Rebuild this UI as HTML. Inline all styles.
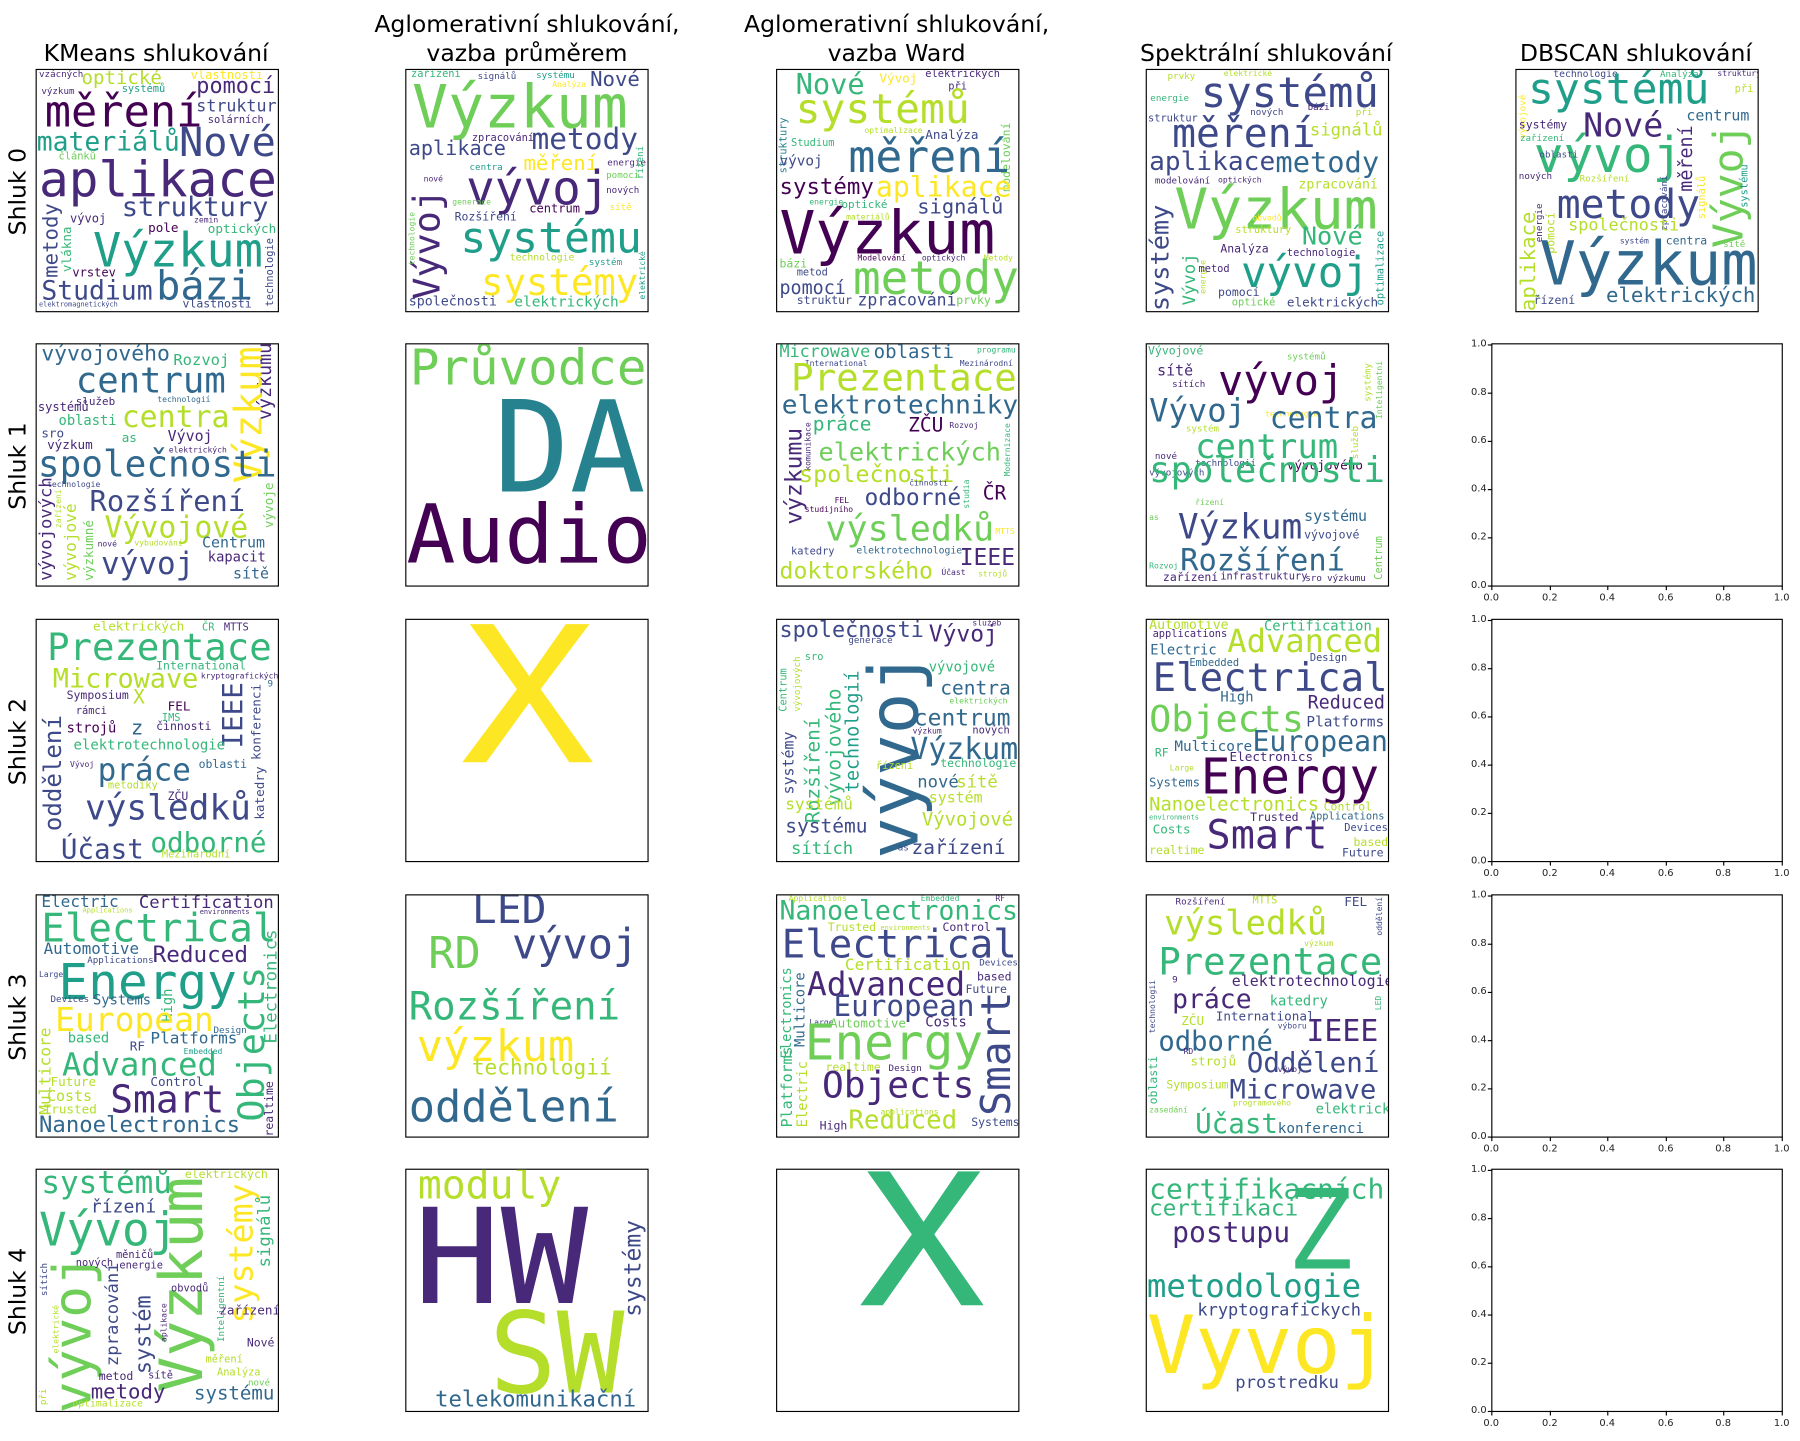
<!DOCTYPE html>
<html><head><meta charset="utf-8"><style>
html,body{margin:0;padding:0;background:#fff;overflow:hidden}
#w{position:absolute;left:0;top:0;width:1568px;height:1255px;transform:scale(1.148);transform-origin:0 0}
.t{position:absolute;font-family:"DejaVu Sans","Liberation Sans",sans-serif;font-size:20.5px;color:#000;text-align:center;line-height:25px;white-space:nowrap}
.rl{position:absolute;font-family:"DejaVu Sans",sans-serif;font-size:20.5px;transform:rotate(-90deg);transform-origin:0 0;white-space:nowrap}
.p{position:absolute;width:212px;height:212px;border:1px solid #000;box-sizing:border-box;overflow:hidden;background:#fff}
.p i{position:absolute;font-style:normal;font-family:"DejaVu Sans Mono","Liberation Mono",monospace;line-height:1;white-space:nowrap}
.p i.r{transform:rotate(-90deg);transform-origin:0 0}
.a{color:#440154}.b{color:#482878}.c{color:#3e4989}.d{color:#31688e}.e{color:#26828e}.f{color:#1f9e89}.g{color:#35b779}.h{color:#6ece58}.i{color:#b5de2b}.j{color:#fde725}
.ax{position:absolute;left:1299px;width:254px;height:212px;border:1px solid #000;box-sizing:border-box}
.ax span{position:absolute;font-family:"DejaVu Sans",sans-serif;font-size:8.6px;color:#222;line-height:1;white-space:nowrap}
.ax span.y{right:257px;text-align:right}
.ax span.x{top:217px;width:20px;text-align:center}
.ax b{position:absolute;background:#000}
.ax b.ty{left:-4px;width:4px;height:1px}
.ax b.tx{top:210px;width:1px;height:4px}
</style></head><body><div id="w">

<div class="t" style="left:36px;top:34px;width:200px">KMeans shlukování</div>
<div class="t" style="left:300px;top:9px;width:318px">Aglomerativní shlukování,<br>vazba průměrem</div>
<div class="t" style="left:622px;top:9px;width:318px">Aglomerativní shlukování,<br>vazba Ward</div>
<div class="t" style="left:970px;top:34px;width:266px">Spektrální shlukování</div>
<div class="t" style="left:1300px;top:34px;width:250px">DBSCAN shlukování</div>

<div class="rl" style="left:3px;top:205px">Shluk 0</div>
<div class="rl" style="left:3px;top:444px">Shluk 1</div>
<div class="rl" style="left:3px;top:684px">Shluk 2</div>
<div class="rl" style="left:3px;top:924px">Shluk 3</div>
<div class="rl" style="left:3px;top:1163px">Shluk 4</div>

<!-- Row 0 -->
<div class="p" style="left:31px;top:60px">
<i class="b" style="left:2px;top:0;font-size:8px">vzácných</i>
<i class="i" style="left:39px;top:-1px;font-size:16.6px">optické</i>
<i class="j" style="left:134px;top:0;font-size:10.5px">vlastnosti</i>
<i class="b" style="left:139px;top:5px;font-size:19px">pomocí</i>
<i class="b" style="left:4px;top:15px;font-size:8px">výzkum</i>
<i class="f" style="left:74px;top:13px;font-size:9px">systémů</i>
<i class="a" style="left:7px;top:17px;font-size:38px">měření</i>
<i class="c" style="left:139px;top:25px;font-size:14.5px">struktur</i>
<i class="b" style="left:149px;top:40px;font-size:9px">solárních</i>
<i class="f" style="left:0;top:52px;font-size:23px">materiálů</i>
<i class="c" style="left:124px;top:47px;font-size:35px">Nové</i>
<i class="h" style="left:19px;top:72px;font-size:9px">článků</i>
<i class="b" style="left:2px;top:75px;font-size:43px">aplikace</i>
<i class="c" style="left:74px;top:108px;font-size:23.6px">struktury</i>
<i class="c r" style="left:4px;top:181px;font-size:18px">metody</i>
<i class="b" style="left:29px;top:125px;font-size:10.5px">vývoj</i>
<i class="a" style="left:97px;top:132px;font-size:11px">pole</i>
<i class="b" style="left:137px;top:128px;font-size:7px">zemin</i>
<i class="g" style="left:149px;top:133px;font-size:11px">optických</i>
<i class="f" style="left:49px;top:137px;font-size:41px">Výzkum</i>
<i class="g r" style="left:21px;top:176px;font-size:11px">vlákna</i>
<i class="a" style="left:31px;top:172px;font-size:10.5px">vrstev</i>
<i class="d" style="left:104px;top:172px;font-size:35px">bázi</i>
<i class="c" style="left:4px;top:182px;font-size:23px">Studium</i>
<i class="c r" style="left:200px;top:206px;font-size:9px">technologie</i>
<i class="c" style="left:127px;top:200px;font-size:10px">vlastnosti</i>
<i class="c" style="left:2px;top:202px;font-size:6px">elektromagnetických</i>
</div>

<div class="p" style="left:353px;top:60px">
<i class="g" style="left:4px;top:0;font-size:9px">zařízení</i>
<i class="c" style="left:62px;top:2px;font-size:8px">signálů</i>
<i class="f" style="left:113px;top:1px;font-size:8px">systému</i>
<i class="j" style="left:127px;top:10px;font-size:7px">Analýza</i>
<i class="c" style="left:160px;top:0;font-size:18px">Nové</i>
<i class="h" style="left:5px;top:7px;font-size:52px">Výzkum</i>
<i class="c" style="left:2px;top:61px;font-size:17.6px">aplikace</i>
<i class="b" style="left:57px;top:56px;font-size:9px">zpracování</i>
<i class="c" style="left:109px;top:49px;font-size:25.7px">metody</i>
<i class="b r" style="left:2px;top:200px;font-size:32px">Vývoj</i>
<i class="j" style="left:102px;top:73px;font-size:18px">měření</i>
<i class="b" style="left:15px;top:92px;font-size:7px">nové</i>
<i class="f" style="left:55px;top:81px;font-size:8px">centra</i>
<i class="b" style="left:175px;top:77px;font-size:8px">energie</i>
<i class="g r" style="left:200px;top:95px;font-size:8px">řízení</i>
<i class="h" style="left:174px;top:88px;font-size:8px">pomocí</i>
<i class="b" style="left:52px;top:82px;font-size:41.5px">vývoj</i>
<i class="b" style="left:174px;top:101px;font-size:8px">nových</i>
<i class="h r" style="left:2px;top:170px;font-size:7px">technologie</i>
<i class="c" style="left:42px;top:124px;font-size:10px">Rozšíření</i>
<i class="a" style="left:107px;top:116px;font-size:10.5px">centrum</i>
<i class="j" style="left:177px;top:116px;font-size:8px">sítě</i>
<i class="h" style="left:40px;top:112px;font-size:7px">generace</i>
<i class="f" style="left:47px;top:128px;font-size:37.5px">systému</i>
<i class="i" style="left:90px;top:160px;font-size:8.5px">technologie</i>
<i class="f" style="left:159px;top:164px;font-size:8px">systém</i>
<i class="f r" style="left:203px;top:200px;font-size:7px">elektrické</i>
<i class="j" style="left:65px;top:169px;font-size:32.5px">systémy</i>
<i class="c" style="left:2px;top:196px;font-size:11.6px">společnosti</i>
<i class="g" style="left:94px;top:196px;font-size:12.6px">elektrických</i>
</div>

<div class="p" style="left:676px;top:60px">
<i class="e r" style="left:2px;top:90px;font-size:9px">struktury</i>
<i class="g" style="left:16px;top:0;font-size:25px">Nové</i>
<i class="j" style="left:89px;top:2px;font-size:11px">Vývoj</i>
<i class="b" style="left:129px;top:0;font-size:9px">elektrických</i>
<i class="b" style="left:149px;top:11px;font-size:9px">při</i>
<i class="i" style="left:16px;top:17px;font-size:36px">systémů</i>
<i class="h r" style="left:196px;top:106px;font-size:10px">modelování</i>
<i class="g" style="left:12px;top:60px;font-size:9px">Studium</i>
<i class="i" style="left:76px;top:50px;font-size:7px">optimalizace</i>
<i class="c" style="left:129px;top:51px;font-size:11px">Analýza</i>
<i class="c" style="left:2px;top:73px;font-size:12.5px">vývoj</i>
<i class="d" style="left:62px;top:57px;font-size:39px">měření</i>
<i class="a" style="left:2px;top:92px;font-size:19.5px">systémy</i>
<i class="j" style="left:86px;top:90px;font-size:24.5px">aplikace</i>
<i class="g" style="left:28px;top:112px;font-size:7px">energie</i>
<i class="g" style="left:56px;top:113px;font-size:9.5px">optické</i>
<i class="c" style="left:122px;top:111px;font-size:17.8px">signálů</i>
<i class="i" style="left:60px;top:125px;font-size:7px">materiálů</i>
<i class="a" style="left:2px;top:117px;font-size:52px">Výzkum</i>
<i class="a" style="left:70px;top:161px;font-size:7px">Modelování</i>
<i class="b" style="left:126px;top:161px;font-size:7px">optických</i>
<i class="i" style="left:180px;top:161px;font-size:7px">Metody</i>
<i class="h" style="left:2px;top:165px;font-size:10px">bázi</i>
<i class="h" style="left:66px;top:162px;font-size:40px">metody</i>
<i class="c" style="left:17px;top:173px;font-size:9px">metod</i>
<i class="c" style="left:2px;top:182px;font-size:16px">pomocí</i>
<i class="c" style="left:17px;top:197px;font-size:10px">struktur</i>
<i class="c" style="left:70px;top:194px;font-size:14.3px">zpracování</i>
<i class="h" style="left:156px;top:197px;font-size:10px">prvky</i>
</div>

<div class="p" style="left:998px;top:60px">
<i class="i" style="left:18px;top:2px;font-size:8px">prvky</i>
<i class="i" style="left:67px;top:0;font-size:7px">elektrické</i>
<i class="c" style="left:47px;top:2px;font-size:36.8px">systémů</i>
<i class="g" style="left:3px;top:21px;font-size:8px">energie</i>
<i class="c" style="left:22px;top:39px;font-size:34.6px">měření</i>
<i class="c" style="left:90px;top:33px;font-size:8px">nových</i>
<i class="b" style="left:140px;top:29px;font-size:8px">bázi</i>
<i class="i" style="left:182px;top:33px;font-size:8px">při</i>
<i class="c" style="left:1px;top:39px;font-size:9px">struktur</i>
<i class="i" style="left:142px;top:45px;font-size:15px">signálů</i>
<i class="c" style="left:2px;top:69px;font-size:22.8px">aplikace</i>
<i class="d" style="left:112px;top:68px;font-size:25px">metody</i>
<i class="b" style="left:7px;top:93px;font-size:8px">modelování</i>
<i class="b" style="left:62px;top:93px;font-size:7px">optických</i>
<i class="i" style="left:132px;top:94px;font-size:11.5px">zpracování</i>
<i class="c r" style="left:2px;top:210px;font-size:22px">systémy</i>
<i class="h" style="left:24px;top:97px;font-size:49px">Výzkum</i>
<i class="g r" style="left:30px;top:205px;font-size:15px">Vývoj</i>
<i class="i r" style="left:46px;top:195px;font-size:7px">energie</i>
<i class="i" style="left:77px;top:136px;font-size:9px">struktury</i>
<i class="j" style="left:92px;top:126px;font-size:7px">obvodů</i>
<i class="g" style="left:135px;top:135px;font-size:22px">Nové</i>
<i class="b" style="left:64px;top:152px;font-size:10px">Analýza</i>
<i class="b" style="left:122px;top:156px;font-size:9px">technologie</i>
<i class="b" style="left:45px;top:170px;font-size:9px">metod</i>
<i class="f" style="left:82px;top:158px;font-size:37px">vývoj</i>
<i class="f r" style="left:200px;top:205px;font-size:9px">optimalizace</i>
<i class="c" style="left:62px;top:190px;font-size:10px">pomocí</i>
<i class="h" style="left:74px;top:199px;font-size:9px">optické</i>
<i class="c" style="left:122px;top:197px;font-size:11px">elektrických</i>
</div>

<div class="p" style="left:1320px;top:60px">
<i class="c" style="left:32px;top:0;font-size:8.5px">technologie</i>
<i class="g" style="left:125px;top:0;font-size:8px">Analýza</i>
<i class="b" style="left:175px;top:0;font-size:7px">struktury</i>
<i class="f" style="left:10px;top:-2px;font-size:37.5px">systémů</i>
<i class="i" style="left:190px;top:13px;font-size:9px">při</i>
<i class="j r" style="left:2px;top:60px;font-size:8px">vývojové</i>
<i class="b" style="left:2px;top:44px;font-size:10px">systémy</i>
<i class="b" style="left:58px;top:34px;font-size:29px">Nové</i>
<i class="d" style="left:148px;top:34px;font-size:13px">centrum</i>
<i class="g" style="left:3px;top:56px;font-size:8px">zařízení</i>
<i class="g" style="left:15px;top:54px;font-size:43px">vývoj</i>
<i class="c" style="left:20px;top:70px;font-size:8px">oblasti</i>
<i class="b r" style="left:140px;top:106px;font-size:16px">měření</i>
<i class="h r" style="left:168px;top:155px;font-size:36px">Vývoj</i>
<i class="f r" style="left:195px;top:120px;font-size:9px">systému</i>
<i class="j r" style="left:158px;top:130px;font-size:9px">signálů</i>
<i class="b" style="left:2px;top:89px;font-size:8px">nových</i>
<i class="i" style="left:55px;top:91px;font-size:8px">Rozšíření</i>
<i class="c r" style="left:125px;top:140px;font-size:8px">zpracování</i>
<i class="c" style="left:35px;top:101px;font-size:34.6px">metody</i>
<i class="b r" style="left:16px;top:150px;font-size:8px">energie</i>
<i class="i r" style="left:26px;top:160px;font-size:10px">pomocí</i>
<i class="i r" style="left:2px;top:210px;font-size:18px">aplikace</i>
<i class="i" style="left:45px;top:129px;font-size:14.6px">společnosti</i>
<i class="c" style="left:90px;top:146px;font-size:7px">systém</i>
<i class="d" style="left:130px;top:145px;font-size:10px">centra</i>
<i class="h" style="left:180px;top:148px;font-size:8px">sítě</i>
<i class="d" style="left:20px;top:144px;font-size:52.6px">Výzkum</i>
<i class="c" style="left:15px;top:197px;font-size:10px">řízení</i>
<i class="d" style="left:78px;top:188px;font-size:18px">elektrických</i>
</div>

<!-- Row 1 -->
<div class="p" style="left:31px;top:299px">
<i class="d" style="left:4px;top:0;font-size:18.6px">vývojového</i>
<i class="g" style="left:119px;top:8px;font-size:13.5px">Rozvoj</i>
<i class="b r" style="left:191px;top:66px;font-size:16px">výzkumu</i>
<i class="d" style="left:34px;top:17px;font-size:31px">centrum</i>
<i class="j r" style="left:168px;top:121px;font-size:33px">Výzkum</i>
<i class="b" style="left:1px;top:50px;font-size:10.5px">systémů</i>
<i class="b" style="left:34px;top:46px;font-size:9.5px">služeb</i>
<i class="d" style="left:105px;top:45px;font-size:7px">technologií</i>
<i class="g" style="left:19px;top:60px;font-size:12px">oblasti</i>
<i class="i" style="left:74px;top:51px;font-size:26px">centra</i>
<i class="c" style="left:4px;top:72px;font-size:11px">sro</i>
<i class="g" style="left:74px;top:76px;font-size:11px">as</i>
<i class="b" style="left:114px;top:74px;font-size:13px">Vývoj</i>
<i class="b" style="left:9px;top:82px;font-size:11px">výzkum</i>
<i class="b" style="left:115px;top:89px;font-size:7px">elektrických</i>
<i class="d" style="left:1px;top:90px;font-size:31.4px">společnosti</i>
<i class="c" style="left:9px;top:119px;font-size:7px">technologie</i>
<i class="c" style="left:46px;top:124px;font-size:25px">Rozšíření</i>
<i class="b r" style="left:1px;top:206px;font-size:15px">vývojových</i>
<i class="i r" style="left:16px;top:160px;font-size:7px">zařízení</i>
<i class="i r" style="left:23px;top:206px;font-size:14px">vývojové</i>
<i class="h r" style="left:40px;top:206px;font-size:11px">výzkumné</i>
<i class="i" style="left:59px;top:147px;font-size:26px">Vývojové</i>
<i class="h r" style="left:197px;top:160px;font-size:11px">vývoje</i>
<i class="i" style="left:85px;top:170px;font-size:7px">vybudování</i>
<i class="b" style="left:53px;top:171px;font-size:7px">nové</i>
<i class="d" style="left:144px;top:167px;font-size:13px">Centrum</i>
<i class="b" style="left:149px;top:179px;font-size:12px">kapacit</i>
<i class="c" style="left:56px;top:178px;font-size:27px">vývoj</i>
<i class="d" style="left:171px;top:194px;font-size:13px">sítě</i>
</div>

<div class="p" style="left:353px;top:299px">
<i class="h" style="left:3px;top:0;font-size:42.8px">Průvodce</i>
<i class="e" style="left:76px;top:35px;font-size:110px">DA</i>
<i class="a" style="left:0;top:130px;font-size:71px">Audio</i>
</div>

<div class="p" style="left:676px;top:299px">
<i class="g" style="left:2px;top:0;font-size:14.6px">Microwave</i>
<i class="d" style="left:84px;top:-1px;font-size:16.6px">oblasti</i>
<i class="g" style="left:174px;top:2px;font-size:7px">programu</i>
<i class="c" style="left:24px;top:14px;font-size:7px">International</i>
<i class="c" style="left:159px;top:14px;font-size:7px">Mezinárodní</i>
<i class="i" style="left:12px;top:13px;font-size:32.7px">Prezentace</i>
<i class="d" style="left:4px;top:42px;font-size:22.8px">elektrotechniky</i>
<i class="b r" style="left:4px;top:157px;font-size:20px">výzkumu</i>
<i class="g" style="left:31px;top:62px;font-size:17px">práce</i>
<i class="a" style="left:114px;top:63px;font-size:17px">ZČU</i>
<i class="b" style="left:150px;top:68px;font-size:7px">Rozvoj</i>
<i class="b r" style="left:24px;top:110px;font-size:7px">komunikace</i>
<i class="g r" style="left:198px;top:115px;font-size:7px">Modernizace</i>
<i class="h" style="left:36px;top:84px;font-size:22px">elektrických</i>
<i class="i" style="left:19px;top:103px;font-size:20.4px">společnosti</i>
<i class="c" style="left:76px;top:123px;font-size:20px">odborné</i>
<i class="c" style="left:115px;top:118px;font-size:7px">činnosti</i>
<i class="a" style="left:179px;top:122px;font-size:17px">ČR</i>
<i class="a" style="left:50px;top:133px;font-size:7px">FEL</i>
<i class="a" style="left:24px;top:141px;font-size:7px">studijního</i>
<i class="g r" style="left:162px;top:143px;font-size:7px">studia</i>
<i class="h" style="left:42px;top:147px;font-size:30.5px">výsledků</i>
<i class="j" style="left:190px;top:160px;font-size:7px">MTTS</i>
<i class="c" style="left:12px;top:177px;font-size:9px">katedry</i>
<i class="d" style="left:69px;top:176px;font-size:8.5px">elektrotechnologie</i>
<i class="b" style="left:159px;top:175px;font-size:20px">IEEE</i>
<i class="i" style="left:2px;top:187px;font-size:20.2px">doktorského</i>
<i class="b" style="left:143px;top:196px;font-size:7px">Účast</i>
<i class="i" style="left:175px;top:197px;font-size:7px">strojů</i>
</div>

<div class="p" style="left:998px;top:299px">
<i class="g" style="left:1px;top:2px;font-size:10px">Vývojové</i>
<i class="h" style="left:122px;top:7px;font-size:8px">systémů</i>
<i class="b" style="left:9px;top:17px;font-size:13px">sítě</i>
<i class="a" style="left:62px;top:14px;font-size:36.5px">vývoj</i>
<i class="b" style="left:22px;top:31px;font-size:8px">sítích</i>
<i class="h r" style="left:200px;top:65px;font-size:7px">Inteligentní</i>
<i class="i r" style="left:189px;top:50px;font-size:8px">systémy</i>
<i class="d" style="left:2px;top:44px;font-size:28px">Vývoj</i>
<i class="j" style="left:103px;top:58px;font-size:7px">technologie</i>
<i class="d" style="left:107px;top:52px;font-size:26px">centra</i>
<i class="i" style="left:34px;top:70px;font-size:8px">systém</i>
<i class="g" style="left:42px;top:75px;font-size:29.6px">centrum</i>
<i class="b" style="left:7px;top:94px;font-size:8px">nové</i>
<i class="i r" style="left:178px;top:100px;font-size:8px">služeb</i>
<i class="c" style="left:42px;top:100px;font-size:8px">technologií</i>
<i class="c" style="left:2px;top:108px;font-size:8px">vývojových</i>
<i class="a" style="left:122px;top:100px;font-size:11px">vývojového</i>
<i class="g" style="left:2px;top:95px;font-size:31px">společnosti</i>
<i class="h" style="left:42px;top:135px;font-size:7px">řízení</i>
<i class="h" style="left:2px;top:148px;font-size:7px">as</i>
<i class="c" style="left:27px;top:145px;font-size:30px">Výzkum</i>
<i class="d" style="left:137px;top:144px;font-size:13px">systému</i>
<i class="c" style="left:137px;top:162px;font-size:10px">vývojové</i>
<i class="h r" style="left:199px;top:205px;font-size:9px">Centrum</i>
<i class="g" style="left:2px;top:190px;font-size:7px">Rozvoj</i>
<i class="d" style="left:29px;top:176px;font-size:26.5px">Rozšíření</i>
<i class="b" style="left:14px;top:199px;font-size:10px">zařízení</i>
<i class="b" style="left:64px;top:199px;font-size:9px">infrastruktury</i>
<i class="b" style="left:138px;top:200px;font-size:8px">sro</i>
<i class="b" style="left:157px;top:200px;font-size:8px">výzkumu</i>
</div>

<!-- Row 2 -->
<div class="p" style="left:31px;top:539px">
<i class="i" style="left:49px;top:0;font-size:11px">elektrických</i>
<i class="g" style="left:144px;top:3px;font-size:9px">ČR</i>
<i class="b" style="left:163px;top:3px;font-size:9px">MTTS</i>
<i class="g" style="left:9px;top:8px;font-size:32.5px">Prezentace</i>
<i class="g" style="left:104px;top:36px;font-size:10px">International</i>
<i class="b" style="left:143px;top:46px;font-size:7px">kryptografických</i>
<i class="i" style="left:14px;top:40px;font-size:23.4px">Microwave</i>
<i class="c r" style="left:159px;top:112px;font-size:24px">IEEE</i>
<i class="d" style="left:201px;top:52px;font-size:8px">9</i>
<i class="c r" style="left:186px;top:122px;font-size:11px">konferenci</i>
<i class="b" style="left:26px;top:62px;font-size:10px">Symposium</i>
<i class="i" style="left:84px;top:60px;font-size:17px">X</i>
<i class="b" style="left:34px;top:76px;font-size:9px">rámci</i>
<i class="a" style="left:114px;top:70px;font-size:11px">FEL</i>
<i class="g" style="left:109px;top:82px;font-size:9px">IMS</i>
<i class="c r" style="left:4px;top:184px;font-size:21px">oddělení</i>
<i class="a" style="left:26px;top:88px;font-size:12px">strojů</i>
<i class="d" style="left:82px;top:86px;font-size:18px">z</i>
<i class="b" style="left:104px;top:89px;font-size:10px">činnosti</i>
<i class="g" style="left:32px;top:103px;font-size:12.2px">elektrotechnologie</i>
<i class="b" style="left:29px;top:123px;font-size:7px">Vývoj</i>
<i class="d" style="left:53px;top:118px;font-size:27px">práce</i>
<i class="d" style="left:141px;top:122px;font-size:10px">oblasti</i>
<i class="i" style="left:62px;top:141px;font-size:9px">metodiky</i>
<i class="b" style="left:114px;top:150px;font-size:10px">ZČU</i>
<i class="c r" style="left:189px;top:174px;font-size:11px">katedry</i>
<i class="c" style="left:42px;top:150px;font-size:30px">výsledků</i>
<i class="c" style="left:21px;top:188px;font-size:24px">Účast</i>
<i class="g" style="left:99px;top:182px;font-size:24px">odborné</i>
<i class="i" style="left:109px;top:201px;font-size:9px">Mezinárodní</i>
</div>

<div class="p" style="left:353px;top:539px">
<i class="j" style="left:56px;top:-15px;font-size:165px;transform:scaleX(1.18);transform-origin:50% 50%">X</i>
</div>

<div class="p" style="left:676px;top:539px">
<i class="c" style="left:2px;top:0;font-size:19px">společnosti</i>
<i class="b" style="left:132px;top:2px;font-size:20px">Vývoj</i>
<i class="b" style="left:170px;top:0;font-size:7px">služeb</i>
<i class="c" style="left:62px;top:14px;font-size:8px">generace</i>
<i class="g" style="left:24px;top:29px;font-size:9px">sro</i>
<i class="g r" style="left:2px;top:80px;font-size:9px">Centrum</i>
<i class="i r" style="left:14px;top:80px;font-size:8px">vývojových</i>
<i class="d r" style="left:72px;top:208px;font-size:60px">vývoj</i>
<i class="g r" style="left:24px;top:177px;font-size:17px">Rozšíření</i>
<i class="g r" style="left:42px;top:162px;font-size:17px">vývojového</i>
<i class="f r" style="left:58px;top:150px;font-size:16px">technologií</i>
<i class="c r" style="left:4px;top:152px;font-size:13px">systémy</i>
<i class="g" style="left:132px;top:35px;font-size:12px">vývojové</i>
<i class="d" style="left:142px;top:52px;font-size:17px">centra</i>
<i class="h" style="left:150px;top:68px;font-size:7px">elektrických</i>
<i class="d" style="left:119px;top:75px;font-size:20px">centrum</i>
<i class="b" style="left:118px;top:94px;font-size:7px">výzkum</i>
<i class="b" style="left:170px;top:93px;font-size:9px">nových</i>
<i class="d" style="left:116px;top:100px;font-size:26px">Výzkum</i>
<i class="g" style="left:142px;top:121px;font-size:10px">technologie</i>
<i class="i" style="left:86px;top:124px;font-size:9px">řízení</i>
<i class="d" style="left:122px;top:134px;font-size:15px">nové</i>
<i class="i" style="left:156px;top:134px;font-size:15px">sítě</i>
<i class="i" style="left:132px;top:149px;font-size:13px">systém</i>
<i class="i" style="left:7px;top:154px;font-size:14px">systémů</i>
<i class="i" style="left:126px;top:166px;font-size:16.5px">Vývojové</i>
<i class="c" style="left:7px;top:172px;font-size:17px">systému</i>
<i class="g" style="left:12px;top:192px;font-size:15px">sítích</i>
<i class="c" style="left:105px;top:195px;font-size:8px">as</i>
<i class="c" style="left:117px;top:191px;font-size:17px">zařízení</i>
</div>

<div class="p" style="left:998px;top:539px">
<i class="i" style="left:2px;top:-1px;font-size:11.5px">Automotive</i>
<i class="g" style="left:102px;top:-1px;font-size:12px">Certification</i>
<i class="b" style="left:5px;top:9px;font-size:9px">applications</i>
<i class="i" style="left:70px;top:5px;font-size:28px">Advanced</i>
<i class="d" style="left:3px;top:20px;font-size:12px">Electric</i>
<i class="c" style="left:142px;top:30px;font-size:9px">Design</i>
<i class="d" style="left:37px;top:34px;font-size:9px">Embedded</i>
<i class="c" style="left:5px;top:34px;font-size:34px">Electrical</i>
<i class="d" style="left:64px;top:61px;font-size:12px">High</i>
<i class="b" style="left:140px;top:64px;font-size:16px">Reduced</i>
<i class="h" style="left:2px;top:70px;font-size:32px">Objects</i>
<i class="c" style="left:139px;top:83px;font-size:12.5px">Platforms</i>
<i class="d" style="left:92px;top:94px;font-size:24.5px">European</i>
<i class="d" style="left:24px;top:104px;font-size:12.5px">Multicore</i>
<i class="g" style="left:7px;top:112px;font-size:10px">RF</i>
<i class="b" style="left:72px;top:114px;font-size:11px">Electronics</i>
<i class="i" style="left:20px;top:126px;font-size:7px">Large</i>
<i class="a" style="left:47px;top:116px;font-size:43px">Energy</i>
<i class="d" style="left:2px;top:137px;font-size:10.5px">Systems</i>
<i class="i" style="left:2px;top:153px;font-size:16.4px">Nanoelectronics</i>
<i class="g" style="left:2px;top:170px;font-size:6px">environments</i>
<i class="i" style="left:154px;top:159px;font-size:10px">Control</i>
<i class="b" style="left:90px;top:168px;font-size:10px">Trusted</i>
<i class="d" style="left:142px;top:168px;font-size:9px">Applications</i>
<i class="g" style="left:5px;top:177px;font-size:11px">Costs</i>
<i class="i" style="left:2px;top:197px;font-size:10px">realtime</i>
<i class="b" style="left:52px;top:171px;font-size:35px">Smart</i>
<i class="c" style="left:172px;top:178px;font-size:9px">Devices</i>
<i class="i" style="left:180px;top:190px;font-size:10px">based</i>
<i class="c" style="left:170px;top:199px;font-size:10px">Future</i>
</div>

<!-- Row 3 -->
<div class="p" style="left:31px;top:779px">
<i class="d" style="left:4px;top:-1px;font-size:14px">Electric</i>
<i class="b" style="left:89px;top:-1px;font-size:15px">Certification</i>
<i class="i" style="left:40px;top:11px;font-size:6px">Applications</i>
<i class="b" style="left:142px;top:12px;font-size:6px">environments</i>
<i class="g" style="left:4px;top:12px;font-size:34px">Electrical</i>
<i class="d" style="left:6px;top:41px;font-size:13.8px">Automotive</i>
<i class="b" style="left:101px;top:42px;font-size:19.7px">Reduced</i>
<i class="c" style="left:44px;top:53px;font-size:8px">Applications</i>
<i class="c" style="left:2px;top:66px;font-size:7px">Large</i>
<i class="f" style="left:19px;top:55px;font-size:43px">Energy</i>
<i class="g r" style="left:108px;top:110px;font-size:12px">High</i>
<i class="g r" style="left:197px;top:129px;font-size:15px">Electronics</i>
<i class="i r" style="left:1px;top:191px;font-size:14px">Multicore</i>
<i class="c" style="left:12px;top:87px;font-size:8px">Devices</i>
<i class="d" style="left:49px;top:85px;font-size:12px">Systems</i>
<i class="j" style="left:16px;top:94px;font-size:28.7px">European</i>
<i class="d" style="left:154px;top:114px;font-size:8px">Design</i>
<i class="g" style="left:27px;top:118px;font-size:12px">based</i>
<i class="c" style="left:81px;top:126px;font-size:11px">RF</i>
<i class="d" style="left:99px;top:118px;font-size:14px">Platforms</i>
<i class="f" style="left:128px;top:133px;font-size:7px">Embedded</i>
<i class="g r" style="left:171px;top:197px;font-size:32px">Objects</i>
<i class="g" style="left:22px;top:134px;font-size:28px">Advanced</i>
<i class="i" style="left:12px;top:157px;font-size:11px">Future</i>
<i class="c" style="left:99px;top:157px;font-size:11px">Control</i>
<i class="i" style="left:9px;top:169px;font-size:13px">Costs</i>
<i class="i" style="left:6px;top:181px;font-size:11px">Trusted</i>
<i class="b" style="left:64px;top:161px;font-size:33px">Smart</i>
<i class="b r" style="left:199px;top:210px;font-size:10px">realtime</i>
<i class="d" style="left:2px;top:190px;font-size:19.4px">Nanoelectronics</i>
</div>

<div class="p" style="left:353px;top:779px">
<i class="c" style="left:57px;top:-5px;font-size:36px">LED</i>
<i class="h" style="left:19px;top:31px;font-size:38px">RD</i>
<i class="c" style="left:92px;top:25px;font-size:36.5px">vývoj</i>
<i class="g" style="left:2px;top:80px;font-size:34px">Rozšíření</i>
<i class="j" style="left:9px;top:112px;font-size:38px">výzkum</i>
<i class="i" style="left:57px;top:142px;font-size:18.4px">technologií</i>
<i class="d" style="left:2px;top:165px;font-size:38px">oddělení</i>
</div>

<div class="p" style="left:676px;top:779px">
<i class="i" style="left:10px;top:0;font-size:7px">Applications</i>
<i class="g" style="left:125px;top:0;font-size:7px">Embedded</i>
<i class="b" style="left:190px;top:0;font-size:7px">RF</i>
<i class="g" style="left:2px;top:3px;font-size:23px">Nanoelectronics</i>
<i class="i" style="left:44px;top:24px;font-size:10px">Trusted</i>
<i class="i" style="left:90px;top:26px;font-size:6px">environments</i>
<i class="b" style="left:144px;top:24px;font-size:10px">Control</i>
<i class="c" style="left:4px;top:26px;font-size:34px">Electrical</i>
<i class="i" style="left:59px;top:54px;font-size:14px">Certification</i>
<i class="c" style="left:176px;top:55px;font-size:8px">Devices</i>
<i class="b" style="left:174px;top:67px;font-size:10px">based</i>
<i class="b" style="left:26px;top:63px;font-size:28.6px">Advanced</i>
<i class="c" style="left:164px;top:78px;font-size:10px">Future</i>
<i class="c" style="left:49px;top:85px;font-size:25.5px">European</i>
<i class="c" style="left:28px;top:108px;font-size:7px">Large</i>
<i class="h" style="left:46px;top:106px;font-size:11px">Automotive</i>
<i class="b" style="left:129px;top:104px;font-size:12px">Costs</i>
<i class="c r" style="left:174px;top:192px;font-size:36px">Smart</i>
<i class="g r" style="left:2px;top:142px;font-size:12px">Electronics</i>
<i class="d r" style="left:14px;top:132px;font-size:12px">Multicore</i>
<i class="g r" style="left:3px;top:202px;font-size:13px">Platforms</i>
<i class="i r" style="left:16px;top:202px;font-size:12px">Electric</i>
<i class="h" style="left:24px;top:108px;font-size:43px">Energy</i>
<i class="i" style="left:42px;top:146px;font-size:10px">realtime</i>
<i class="b" style="left:97px;top:147px;font-size:8px">Design</i>
<i class="b" style="left:39px;top:151px;font-size:31.5px">Objects</i>
<i class="i" style="left:90px;top:186px;font-size:7px">applications</i>
<i class="b" style="left:37px;top:197px;font-size:10px">High</i>
<i class="i" style="left:62px;top:185px;font-size:22.5px">Reduced</i>
<i class="c" style="left:169px;top:194px;font-size:10px">Systems</i>
</div>

<div class="p" style="left:998px;top:779px">
<i class="b" style="left:25px;top:2px;font-size:8px">Rozšíření</i>
<i class="i" style="left:92px;top:1px;font-size:9px">MTTS</i>
<i class="c" style="left:172px;top:0;font-size:11px">FEL</i>
<i class="c r" style="left:200px;top:35px;font-size:7px">oddělení</i>
<i class="i" style="left:15px;top:10px;font-size:29.5px">výsledků</i>
<i class="i" style="left:137px;top:39px;font-size:7px">výzkum</i>
<i class="g" style="left:10px;top:42px;font-size:32.4px">Prezentace</i>
<i class="b" style="left:22px;top:70px;font-size:8px">9</i>
<i class="b" style="left:74px;top:69px;font-size:13px">elektrotechnologie</i>
<i class="c r" style="left:2px;top:120px;font-size:7px">technologii</i>
<i class="g r" style="left:199px;top:100px;font-size:7px">LED</i>
<i class="b" style="left:22px;top:80px;font-size:23px">práce</i>
<i class="g" style="left:107px;top:86px;font-size:12px">katedry</i>
<i class="c" style="left:60px;top:100px;font-size:11px">International</i>
<i class="i" style="left:30px;top:104px;font-size:11px">ZČU</i>
<i class="c" style="left:114px;top:111px;font-size:7px">výboru</i>
<i class="b" style="left:139px;top:106px;font-size:26px">IEEE</i>
<i class="d" style="left:10px;top:116px;font-size:23.7px">odborné</i>
<i class="b" style="left:32px;top:133px;font-size:7px">RD</i>
<i class="i" style="left:38px;top:139px;font-size:11px">strojů</i>
<i class="c" style="left:87px;top:134px;font-size:24px">Oddělení</i>
<i class="g r" style="left:2px;top:182px;font-size:10px">oblasti</i>
<i class="b" style="left:114px;top:149px;font-size:7px">vývoj</i>
<i class="i" style="left:17px;top:161px;font-size:10px">Symposium</i>
<i class="c" style="left:72px;top:158px;font-size:23.6px">Microwave</i>
<i class="i" style="left:75px;top:178px;font-size:7px">programového</i>
<i class="g" style="left:147px;top:180px;font-size:12px">elektrických</i>
<i class="h" style="left:2px;top:184px;font-size:7px">zasedání</i>
<i class="g" style="left:42px;top:187px;font-size:24px">Účast</i>
<i class="d" style="left:114px;top:197px;font-size:12.5px">konferenci</i>
</div>

<!-- Row 4 -->
<div class="p" style="left:31px;top:1018px">
<i class="g" style="left:4px;top:-2px;font-size:27px">systémů</i>
<i class="i" style="left:129px;top:0;font-size:10px">elektrických</i>
<i class="c" style="left:47px;top:24px;font-size:15.8px">řízení</i>
<i class="g" style="left:2px;top:33px;font-size:40px">Vývoj</i>
<i class="h r" style="left:101px;top:194px;font-size:52px">Výzkum</i>
<i class="j r" style="left:164px;top:134px;font-size:29px">systémy</i>
<i class="g r" style="left:191px;top:85px;font-size:15px">signálů</i>
<i class="h r" style="left:8px;top:212px;font-size:46px">vývoj</i>
<i class="c r" style="left:3px;top:110px;font-size:8px">sítích</i>
<i class="i r" style="left:14px;top:160px;font-size:7px">elektrické</i>
<i class="b" style="left:34px;top:78px;font-size:9px">nových</i>
<i class="b" style="left:69px;top:71px;font-size:9px">měničů</i>
<i class="b" style="left:72px;top:80px;font-size:9px">energie</i>
<i class="c r" style="left:59px;top:171px;font-size:15px">zpracování</i>
<i class="c r" style="left:84px;top:178px;font-size:19px">systém</i>
<i class="b" style="left:117px;top:100px;font-size:9px">obvodů</i>
<i class="g r" style="left:157px;top:150px;font-size:8px">Inteligentní</i>
<i class="b r" style="left:108px;top:150px;font-size:7px">aplikace</i>
<i class="b" style="left:159px;top:117px;font-size:11px">zařízení</i>
<i class="b" style="left:183px;top:147px;font-size:10px">Nové</i>
<i class="i" style="left:147px;top:162px;font-size:9px">měření</i>
<i class="i" style="left:157px;top:173px;font-size:9px">Analýza</i>
<i class="h" style="left:184px;top:182px;font-size:8px">nové</i>
<i class="b" style="left:54px;top:176px;font-size:10px">metod</i>
<i class="b" style="left:97px;top:176px;font-size:9px">sítě</i>
<i class="b" style="left:47px;top:185px;font-size:18px">metody</i>
<i class="d" style="left:137px;top:187px;font-size:16.6px">systému</i>
<i class="i" style="left:31px;top:200px;font-size:8.5px">optimalizace</i>
<i class="i r" style="left:2px;top:205px;font-size:8px">při</i>
</div>

<div class="p" style="left:353px;top:1018px">
<i class="i" style="left:10px;top:-3px;font-size:34.6px">moduly</i>
<i class="b" style="left:6px;top:20px;font-size:115px;transform:scaleX(1.1);transform-origin:0 50%">HW</i>
<i class="c r" style="left:187px;top:128px;font-size:20px">systémy</i>
<i class="i" style="left:72px;top:112px;font-size:98px">SW</i>
<i class="d" style="left:25px;top:190px;font-size:19.4px">telekomunikační</i>
</div>

<div class="p" style="left:676px;top:1018px">
<i class="g" style="left:78px;top:-17px;font-size:160px;transform:scaleX(1.15);transform-origin:50% 50%">X</i>
</div>

<div class="p" style="left:998px;top:1018px">
<i class="g" style="left:2px;top:5px;font-size:24.3px">certifikacních</i>
<i class="g" style="left:2px;top:24px;font-size:19.6px">certifikaci</i>
<i class="g" style="left:122px;top:5px;font-size:96px">Z</i>
<i class="b" style="left:22px;top:43px;font-size:24.4px">postupu</i>
<i class="f" style="left:0;top:88px;font-size:28.2px">metodologie</i>
<i class="c" style="left:44px;top:116px;font-size:14.8px">kryptografickych</i>
<i class="j" style="left:0;top:118px;font-size:70px">Vyvoj</i>
<i class="c" style="left:77px;top:178px;font-size:15px">prostredku</i>
</div>

<!-- empty axes -->
<div class="ax" style="top:299px">
<span class="y" style="top:-4px">1.0</span><span class="y" style="top:38px">0.8</span><span class="y" style="top:80px">0.6</span><span class="y" style="top:122px">0.4</span><span class="y" style="top:164px">0.2</span><span class="y" style="top:206px">0.0</span>
<b class="ty" style="top:0"></b><b class="ty" style="top:42px"></b><b class="ty" style="top:84px"></b><b class="ty" style="top:126px"></b><b class="ty" style="top:168px"></b><b class="ty" style="top:210px"></b>
<span class="x" style="left:-11px">0.0</span><span class="x" style="left:40px">0.2</span><span class="x" style="left:90px">0.4</span><span class="x" style="left:141px">0.6</span><span class="x" style="left:191px">0.8</span><span class="x" style="left:242px">1.0</span>
<b class="tx" style="left:-1px"></b><b class="tx" style="left:50px"></b><b class="tx" style="left:100px"></b><b class="tx" style="left:151px"></b><b class="tx" style="left:201px"></b><b class="tx" style="left:252px"></b>
</div>
<div class="ax" style="top:539px">
<span class="y" style="top:-4px">1.0</span><span class="y" style="top:38px">0.8</span><span class="y" style="top:80px">0.6</span><span class="y" style="top:122px">0.4</span><span class="y" style="top:164px">0.2</span><span class="y" style="top:206px">0.0</span>
<b class="ty" style="top:0"></b><b class="ty" style="top:42px"></b><b class="ty" style="top:84px"></b><b class="ty" style="top:126px"></b><b class="ty" style="top:168px"></b><b class="ty" style="top:210px"></b>
<span class="x" style="left:-11px">0.0</span><span class="x" style="left:40px">0.2</span><span class="x" style="left:90px">0.4</span><span class="x" style="left:141px">0.6</span><span class="x" style="left:191px">0.8</span><span class="x" style="left:242px">1.0</span>
<b class="tx" style="left:-1px"></b><b class="tx" style="left:50px"></b><b class="tx" style="left:100px"></b><b class="tx" style="left:151px"></b><b class="tx" style="left:201px"></b><b class="tx" style="left:252px"></b>
</div>
<div class="ax" style="top:779px">
<span class="y" style="top:-4px">1.0</span><span class="y" style="top:38px">0.8</span><span class="y" style="top:80px">0.6</span><span class="y" style="top:122px">0.4</span><span class="y" style="top:164px">0.2</span><span class="y" style="top:206px">0.0</span>
<b class="ty" style="top:0"></b><b class="ty" style="top:42px"></b><b class="ty" style="top:84px"></b><b class="ty" style="top:126px"></b><b class="ty" style="top:168px"></b><b class="ty" style="top:210px"></b>
<span class="x" style="left:-11px">0.0</span><span class="x" style="left:40px">0.2</span><span class="x" style="left:90px">0.4</span><span class="x" style="left:141px">0.6</span><span class="x" style="left:191px">0.8</span><span class="x" style="left:242px">1.0</span>
<b class="tx" style="left:-1px"></b><b class="tx" style="left:50px"></b><b class="tx" style="left:100px"></b><b class="tx" style="left:151px"></b><b class="tx" style="left:201px"></b><b class="tx" style="left:252px"></b>
</div>
<div class="ax" style="top:1018px">
<span class="y" style="top:-4px">1.0</span><span class="y" style="top:38px">0.8</span><span class="y" style="top:80px">0.6</span><span class="y" style="top:122px">0.4</span><span class="y" style="top:164px">0.2</span><span class="y" style="top:206px">0.0</span>
<b class="ty" style="top:0"></b><b class="ty" style="top:42px"></b><b class="ty" style="top:84px"></b><b class="ty" style="top:126px"></b><b class="ty" style="top:168px"></b><b class="ty" style="top:210px"></b>
<span class="x" style="left:-11px">0.0</span><span class="x" style="left:40px">0.2</span><span class="x" style="left:90px">0.4</span><span class="x" style="left:141px">0.6</span><span class="x" style="left:191px">0.8</span><span class="x" style="left:242px">1.0</span>
<b class="tx" style="left:-1px"></b><b class="tx" style="left:50px"></b><b class="tx" style="left:100px"></b><b class="tx" style="left:151px"></b><b class="tx" style="left:201px"></b><b class="tx" style="left:252px"></b>
</div>

</div></body></html>
